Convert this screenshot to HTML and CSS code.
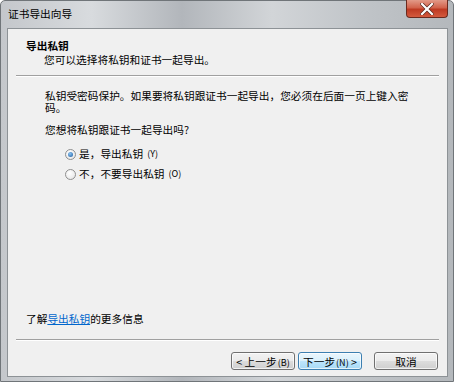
FILE: index.html
```html
<!DOCTYPE html>
<html lang="zh-CN">
<head>
    <meta charset="UTF-8">
    <title>证书导出向导</title>
    <link rel="stylesheet" href="styles.css">
</head>
<body>
    <div class="window">
        <div class="titlebar">
            <span class="title">证书导出向导</span>
            <div class="close">
                <svg width="14" height="12" viewBox="0 0 14 12">
                    <path d="M2 1 L12 11 M12 1 L2 11" stroke="#5a2a20" stroke-width="3.6" stroke-linecap="square"/>
                    <path d="M2 1 L12 11 M12 1 L2 11" stroke="#fff" stroke-width="2.2" stroke-linecap="square"/>
                </svg>
            </div>
        </div>
        <div class="client">
            <div class="header">
                <div class="heading">导出私钥</div>
                <div class="subheading">您可以选择将私钥和证书一起导出。</div>
            </div>
            <div class="separator"></div>
            <div class="content">
                <p class="note">私钥受密码保护。如果要将私钥跟证书一起导出，您必须在后面一页上键入密码。</p>
                <p class="question">您想将私钥跟证书一起导出吗?</p>
                <div class="options">
                    <label class="option"><span class="radio checked"></span>是，导出私钥<span class="key">(Y)</span></label>
                    <label class="option"><span class="radio"></span>不，不要导出私钥<span class="key">(O)</span></label>
                </div>
            </div>
            <div class="learn">了解<a href="#">导出私钥</a>的更多信息</div>
            <div class="separator bottom"></div>
            <div class="buttons">
                <button class="btn">&lt; 上一步<span class="key">(B)</span></button>
                <button class="btn default">下一步<span class="key">(N)</span> &gt;</button>
                <button class="btn cancel">取消</button>
            </div>
        </div>
    </div>
</body>
</html>
```

FILE: styles.css
```css
* {
    box-sizing: border-box;
}

body {
    margin: 0;
    width: 454px;
    height: 382px;
    overflow: hidden;
    font-family: "Noto Sans CJK SC", "Liberation Sans", sans-serif;
    font-size: 10.7px;
    color: #000;
    background: #fff;
}

.window {
    width: 454px;
    height: 382px;
    display: flex;
    flex-direction: column;
    padding: 0 5px 4px 6px;
    border: 1px solid #707579;
    border-radius: 5px 5px 0 0;
    background: linear-gradient(90deg, #c4c7cb 0%, #d8dbde 20%, #b2b6bb 40%, #d2d5d8 60%, #c0c4c8 80%, #b4b8bc 100%);
}

.titlebar {
    height: 27px;
    display: flex;
    justify-content: space-between;
    align-items: flex-start;
}

.title {
    margin-top: 6px;
    padding-left: 1px;
    line-height: 14px;
}

.close {
    width: 42px;
    height: 18px;
    margin-top: -1px;
    display: flex;
    justify-content: center;
    align-items: center;
    border: 1px solid #6b2a1e;
    border-top: none;
    border-radius: 0 0 4px 4px;
    background: linear-gradient(#e29a88 0%, #d2634c 45%, #be3a22 55%, #d45a3e 100%);
}

.client {
    flex: 1;
    display: flex;
    flex-direction: column;
    background: #f0f0f0;
    border: 1px solid #8d9296;
}

.header {
    padding: 10px 0 0 18px;
    line-height: 14px;
}

.heading {
    font-weight: bold;
}

.subheading {
    padding-left: 18px;
}

.separator {
    height: 2px;
    margin: 8px 8px 0;
    border-top: 1px solid #a0a0a0;
    border-bottom: 1px solid #fff;
}

.separator.bottom {
    margin-top: 13px;
}

.content {
    flex: 1;
    padding: 13px 0 0 37px;
}

.content p {
    margin: 0;
    line-height: 12px;
}

.note {
    width: 370px;
}

.question {
    margin-top: 10px !important;
}

.options {
    padding: 12px 0 0 20px;
    display: flex;
    flex-direction: column;
    gap: 8px;
}

.option {
    display: flex;
    align-items: center;
    gap: 3px;
    line-height: 12px;
}

.radio {
    width: 11px;
    height: 11px;
    border: 1px solid #8f8f8f;
    border-radius: 50%;
    background: radial-gradient(circle at 40% 35%, #ffffff, #e2e2e2);
    display: flex;
    justify-content: center;
    align-items: center;
}

.radio.checked::after {
    content: '';
    width: 5px;
    height: 5px;
    border-radius: 50%;
    background: radial-gradient(circle at 40% 35%, #8cc4f2, #1a5a9e);
}

.key {
    font-size: 9px;
    margin-left: 1px;
}

.learn {
    padding: 0 0 0 18px;
    line-height: 14px;
}

.learn a {
    color: #0066cc;
}

.buttons {
    display: flex;
    justify-content: flex-end;
    padding: 11px 9px 6px 0;
}

.btn {
    width: 64px;
    height: 18px;
    padding: 0;
    font-family: inherit;
    font-size: 10.7px;
    color: #000;
    border: 1px solid #707070;
    border-radius: 3px;
    background: linear-gradient(#f2f2f2 0%, #ebebeb 50%, #dddddd 50%, #cfcfcf 100%);
    box-shadow: inset 0 0 0 1px rgba(255, 255, 255, 0.7);
}

.btn.default {
    margin-left: 3px;
    border-color: #3c7fb1;
    background: linear-gradient(#eaf6fd 0%, #d9f0fc 50%, #bee6fd 50%, #a7d9f5 100%);
}

.btn.cancel {
    margin-left: 12px;
}
```
